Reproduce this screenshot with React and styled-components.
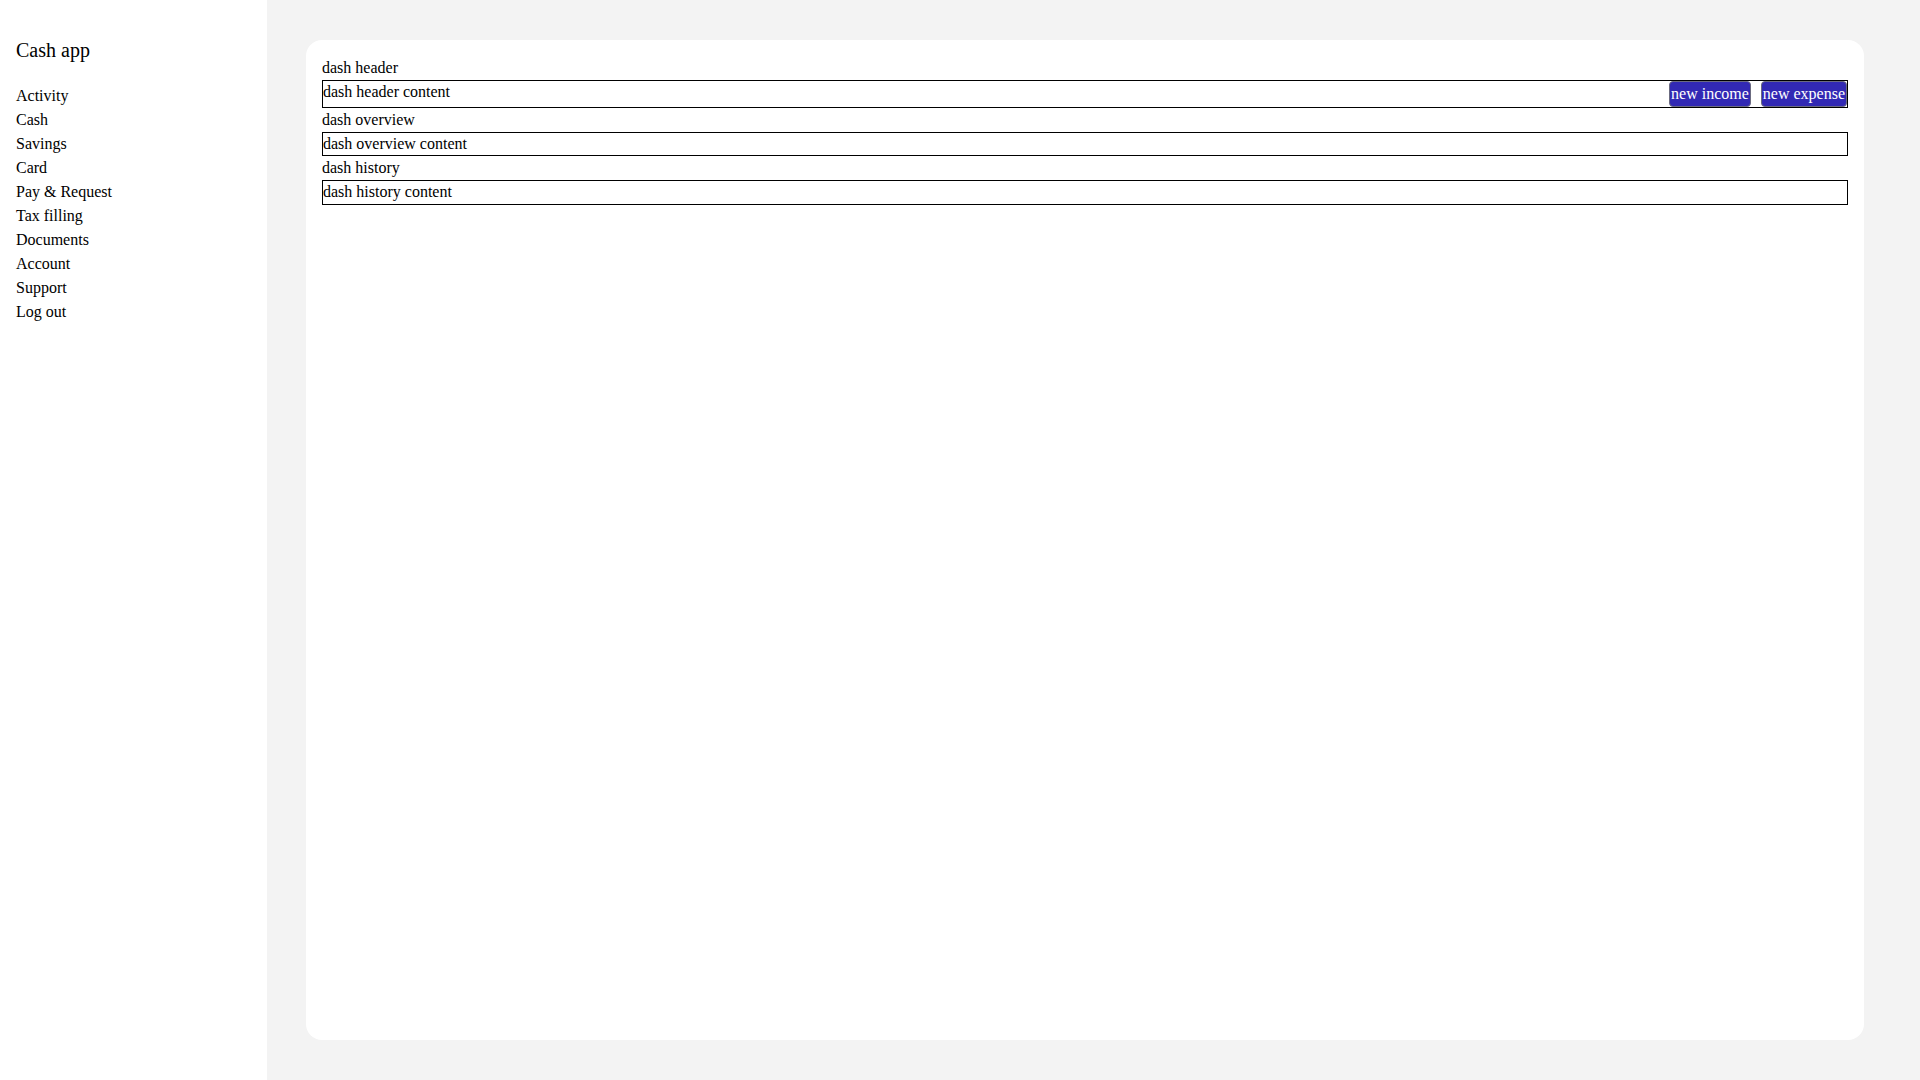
import React from "react";
import styled, { createGlobalStyle } from "styled-components";

const GlobalStyle = createGlobalStyle`
  html, body {
    margin: 0;
    padding: 0;
  }
  body {
    font-family: "Liberation Serif", "Times New Roman", serif;
    font-size: 16px;
    line-height: 1.5;
    color: #000;
    background: #fff;
  }
`;

const Layout = styled.div`
  display: flex;
  min-height: 100vh;
`;

const Sidebar = styled.aside`
  width: 267px;
  flex-shrink: 0;
  background: #fff;
  padding: 0 16px;
  box-sizing: border-box;
`;

const Title = styled.h1`
  font-size: 20px;
  font-weight: normal;
  line-height: 30px;
  margin: 35px 0 19px;
`;

const NavList = styled.ul`
  list-style: none;
  margin: 0;
  padding: 0;
`;

const NavItem = styled.li`
  line-height: 24px;
  cursor: pointer;
`;

const Main = styled.main`
  flex: 1;
  display: flex;
  background: #f3f3f3;
  padding: 40px 56px 40px 39px;
`;

const Card = styled.section`
  flex: 1;
  background: #fff;
  border-radius: 16px;
  padding: 16px;
  box-sizing: border-box;
`;

const Label = styled.div`
  line-height: 24px;
`;

const ContentBox = styled.div`
  border: 1px solid #000;
  display: flex;
  justify-content: space-between;
  line-height: 22.4px;
`;

const ButtonGroup = styled.div`
  display: flex;
  gap: 10px;
`;

const ActionButton = styled.button`
  font: inherit;
  line-height: 24px;
  color: #fff;
  background: #3229b4;
  border: 1px solid #6b6b80;
  border-radius: 4px;
  padding: 0 1px;
  cursor: pointer;
`;

const navItems = [
  "Activity",
  "Cash",
  "Savings",
  "Card",
  "Pay & Request",
  "Tax filling",
  "Documents",
  "Account",
  "Support",
  "Log out",
];

export default function App() {
  return (
    <>
      <GlobalStyle />
      <Layout>
        <Sidebar>
          <Title>Cash app</Title>
          <NavList>
            {navItems.map((item) => (
              <NavItem key={item}>{item}</NavItem>
            ))}
          </NavList>
        </Sidebar>
        <Main>
          <Card>
            <Label>dash header</Label>
            <ContentBox>
              <span>dash header content</span>
              <ButtonGroup>
                <ActionButton>new income</ActionButton>
                <ActionButton>new expense</ActionButton>
              </ButtonGroup>
            </ContentBox>
            <Label>dash overview</Label>
            <ContentBox>dash overview content</ContentBox>
            <Label>dash history</Label>
            <ContentBox>dash history content</ContentBox>
          </Card>
        </Main>
      </Layout>
    </>
  );
}
